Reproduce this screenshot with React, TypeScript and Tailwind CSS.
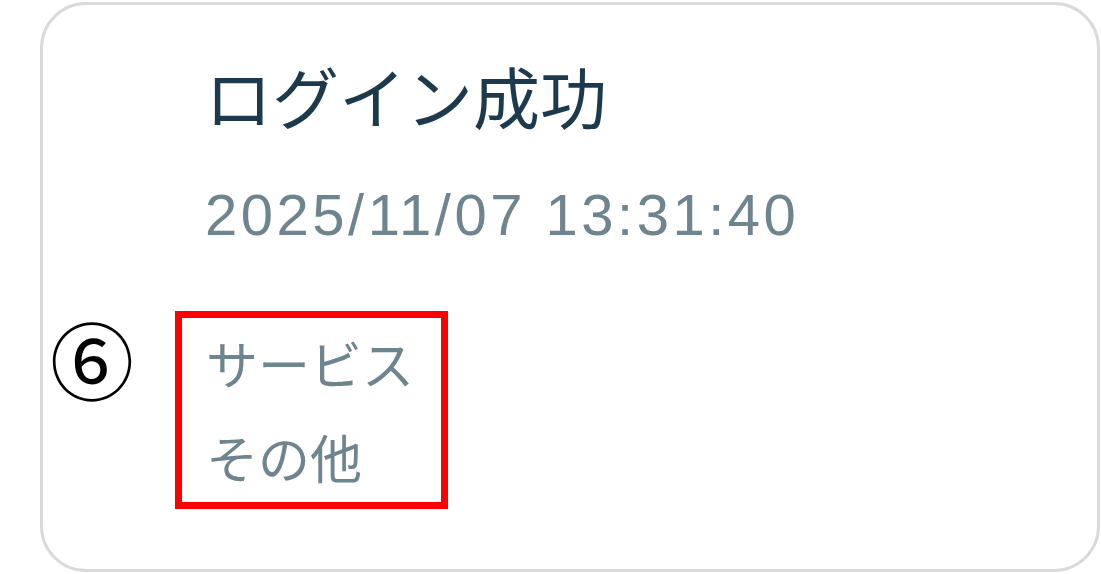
import React from "react";

export default function App() {
  const jp = { fontFamily: '"Noto Sans CJK JP", "Noto Sans", sans-serif' };
  return (
    <div className="w-[1101px] h-[574px] bg-white relative" style={jp}>
      <div className="absolute left-[40px] top-[2px] w-[1060px] h-[570px] rounded-[46px] border-[3px] border-[#dadada] bg-white">
        <div className="flex flex-col pl-[162px] pt-[40px]">
          <div className="text-[67px] leading-[100px] text-[#1c3a4c]">ログイン成功</div>
          <div className="text-[58px] leading-[60px] text-[#6e848e] mt-[40px] tracking-[3.5px] font-['Liberation_Sans',sans-serif]">2025/11/07 13:31:40</div>
          <div className="mt-[66px] ml-[-30px] w-[273px] h-[198px] border-[7px] border-[#ff0000] pl-[24px]">
            <div className="-mt-[2px]">
              <div className="text-[52px] leading-[94px] text-[#6e848e]">サービス</div>
              <div className="text-[52px] leading-[94px] text-[#6e848e]">その他</div>
            </div>
          </div>
        </div>
        <div className="absolute left-[7px] top-[311px] w-[84px] h-[84px] text-[84px] leading-[84px] text-black flex items-center justify-center">⑥</div>
      </div>
    </div>
  );
}
